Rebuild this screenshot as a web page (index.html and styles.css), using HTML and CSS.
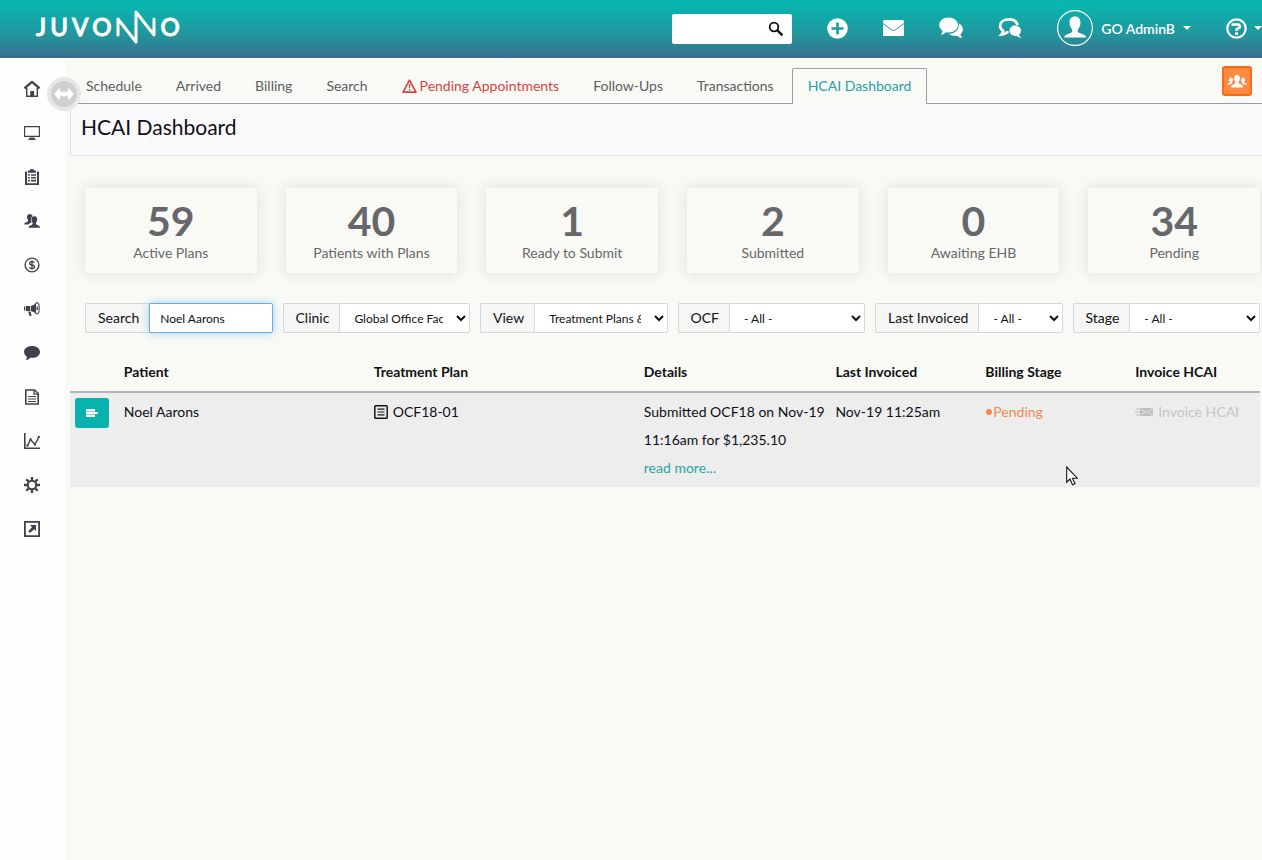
FILE: index.html
```html
<!DOCTYPE html>
<html lang="en">
<head>
<meta charset="utf-8">
<title>HCAI Dashboard</title>
<link rel="stylesheet" href="styles.css">
</head>
<body>
<header class="topbar">
  <a class="logo" href="#" aria-label="Juvonno">
    <span>J</span><span>U</span><span>V</span><span>O</span>
    <svg class="logo-mark" width="41" height="36" viewBox="0 0 41 36" fill="none" stroke="#fff" stroke-width="3" stroke-linejoin="round" stroke-linecap="round"><path d="M2 26V10L20 33V3L38 26V10"/></svg>
    <span>O</span>
  </a>
  <div class="tools">
    <form class="quick"><input type="text" aria-label="Quick search"><button type="button" aria-label="Find"><svg width="16" height="16" viewBox="0 0 16 16" fill="none" stroke="#111"><circle cx="6" cy="6" r="4.3" stroke-width="1.8"/><path d="M9.2 9.2L14.4 14.4" stroke-width="2.4"/></svg></button></form>
    <button class="tool" type="button" aria-label="Add"><svg width="21" height="21" viewBox="0 0 21 21"><circle cx="10.500" cy="10.500" r="10.300" fill="#fff"/><path d="M10.500 4.500v12M4.500 10.500h12" stroke="#1b9da1" stroke-width="2.600"/></svg></button>
    <button class="tool" type="button" aria-label="Mail"><svg width="21" height="16" viewBox="0 0 21 16"><rect width="21" height="16" rx="1.500" fill="#fff"/><path d="M0 3.500L8.500 9.800Q10.500 11.200 12.500 9.800L21 3.500" fill="none" stroke="#239399" stroke-width="1"/></svg></button>
    <button class="tool" type="button" aria-label="Chat"><svg width="24" height="22" viewBox="0 0 24 22" fill="#fff"><path d="M20 6.500C26 10 24 15.500 21.500 17Q21.500 19.500 23.500 21Q20 21 18 18.800Q13 19.500 10 17Q20 16 20 6.500Z"/><path d="M9.500 .5C15 .5 19 3.800 19 8S15 15.500 9.500 15.500Q8 15.500 7 15.200Q4.500 18 1.500 18Q3.500 16 3.500 13.800Q.3 11.500 .3 8C.3 3.800 4 .5 9.500 .5Z"/></svg></button>
    <button class="tool" type="button" aria-label="Conversations"><svg width="24" height="22" viewBox="0 0 25 22"><path d="M20.500 8C19.500 4 16 2 11.500 2C6 2 2.200 4.800 2.200 9Q2.200 12 5.300 14Q5.300 16 3.500 18Q7 18 9 15.500L11 15.700" fill="none" stroke="#fff" stroke-width="2.800"/><path d="M18 8.500C21.500 8.500 24 10.800 24 13.700Q24 16.500 22 17.800Q22 19.800 24.300 21Q21 21.300 19.200 19.200C15 19.500 12 17 12 13.800S14.500 8.500 18 8.500Z" fill="#fff"/></svg></button>
    <button class="user" type="button"><svg width="36" height="36" viewBox="0 0 36 36"><circle cx="18" cy="18" r="17.400" fill="none" stroke="#fff" stroke-width="1.200"/><path d="M18 6.500C21.500 6.500 23.500 9 23.500 12.500C23.500 16 22.200 18 20.800 19.500V22Q22 23 25.500 24.200Q29 25.300 29.300 27.500H7Q7.200 25.300 10.500 24.200Q14 23 15.200 22V19.500C13.800 18 12.500 16 12.500 12.500C12.500 9 14.500 6.500 18 6.500Z" fill="#fff"/></svg><span>GO AdminB</span><i class="caret"></i></button>
    <button class="help" type="button" aria-label="Help"><svg width="21" height="21" viewBox="0 0 21 21" fill="none" stroke="#fff"><circle cx="10.500" cy="10.500" r="9.200" stroke-width="2.200"/><path d="M6.800 8V6.500H12.600L13.800 7.700V9.300L10.600 11.200V13" stroke-width="2.500"/><path d="M9.200 14.300h2.800v2.500H9.200z" fill="#fff" stroke="none"/></svg><i class="caret"></i></button>
  </div>
</header>
<div class="shell">
  <nav class="side" aria-label="Modules">
    <a href="#" aria-label="Home"><svg viewBox="0 0 16 16"><path d="M2.700 7V15.200H13.300V7" fill="none" stroke="#43404c" stroke-width="1.400"/><path d="M.5 7.300L8 .8L15.500 7.300" fill="none" stroke="#43404c" stroke-width="2.200"/><path d="M6.300 10h3.800v5.500H6.300z"/></svg></a>
    <a href="#" aria-label="Desktop"><svg viewBox="0 0 16 16"><path d="M.6 1.600h14.800v9.800H.6z" fill="none" stroke="#43404c" stroke-width="1.200"/><path d="M6 12.500h4l2 2.500H4z"/></svg></a>
    <a href="#" aria-label="Clipboard"><svg viewBox="0 0 16 16"><path d="M2 2.500V15.200H14V2.500" fill="none" stroke="#43404c" stroke-width="2"/><path d="M4 1.500h2V.3h4v1.200h2v2.200H4zM4 5.200h1.800v1.600H4zM7 5.200h5v1.600H7zM4 8h1.800v1.600H4zM7 8h5v1.600H7zM4 10.800h1.800v1.600H4zM7 10.800h5v1.600H7z"/></svg></a>
    <a href="#" aria-label="Patients"><svg viewBox="0 0 16 16"><path d="M5.500 1C7.500 1 8.300 2 8.600 3.200Q6.300 4.500 7 7.500L7.500 9.500Q5 10.500 4.500 11.500H.2Q.2 10 1.500 9.500Q3.500 9 4 8V7Q2.800 5.500 3 3.500Q3.300 1 5.500 1Z"/><path d="M10.300 3.200C12.500 3.200 13.300 4.800 13.200 6.600Q13 8.500 12 9.700V11Q12.500 12 14.500 12.500Q16 13 16 14.700H4.500Q4.600 13 6.200 12.500Q8.200 12 8.600 11V9.700Q7.500 8.500 7.400 6.600Q7.400 3.200 10.300 3.200Z"/></svg></a>
    <a href="#" aria-label="Billing"><svg viewBox="0 0 16 16" fill="none" stroke="#43404c"><circle cx="8" cy="8" r="6.900" stroke-width="1.400"/><path d="M10.500 5.700Q9.800 4.700 8 4.700Q5.700 4.700 5.700 6.300T8 8T10.400 9.700T8 11.400Q6 11.400 5.400 10.200M8 3.200V12.800" stroke-width="1.300"/></svg></a>
    <a href="#" aria-label="Campaigns"><svg viewBox="0 0 16 16"><path d="M0 5.500h1.300v4H0zM2 5H6V10H2zM6.700 5Q9.500 4.500 12 2.200V12.500Q9.500 10.500 6.700 10zM4.200 10.500H6.500L7.500 14.500Q6.500 15.500 5.300 14.500z"/><ellipse cx="13" cy="7.300" rx="2.200" ry="5.700" fill="none" stroke="#43404c" stroke-width="1.100"/><path d="M12.500 5.500h1.400v3.600h-1.400z"/></svg></a>
    <a href="#" aria-label="Messages"><svg viewBox="0 0 16 16"><path d="M8 1C12.500 1 16 3.500 16 7S12.500 12.800 8 12.800L6.300 12.700Q4.500 15 1.500 15.300Q3 13.800 2.800 11.500Q0 10 0 7C0 3.500 3.500 1 8 1Z"/></svg></a>
    <a href="#" aria-label="Documents"><svg viewBox="0 0 16 16" fill="none" stroke="#43404c"><path d="M1.800 1H10.500L14.200 4.500V15H1.800Z" stroke-width="1.600"/><path d="M10 1V5.200H14" stroke-width="1.300"/><path d="M4 7.500H12M4 10H12M4 12.500H12" stroke-width="1.200"/></svg></a>
    <a href="#" aria-label="Reports"><svg viewBox="0 0 16 16" fill="none" stroke="#43404c"><path d="M.8 0V15.200H16" stroke-width="1.600"/><path d="M3.500 12.500L6.500 6.500L11 11.500L14.800 4" stroke-width="1.400"/><path d="M2.500 11.500h2v2h-2zM5.500 5.300h2v2h-2zM10 10.500h2v2h-2zM13.800 3h2v2h-2z" fill="#43404c" stroke="none"/></svg></a>
    <a href="#" aria-label="Settings"><svg viewBox="0 0 16 16" fill="none" stroke="#43404c"><circle cx="8" cy="8" r="4.200" stroke-width="2"/><path d="M8 0V4M8 12V16M0 8H4M12 8H16M2.300 2.300L5 5M11 11L13.700 13.700M2.300 13.700L5 11M11 5L13.700 2.300" stroke-width="2.300"/></svg></a>
    <a href="#" aria-label="Open external"><svg viewBox="0 0 16 16"><path d="M.9 .9h14.200v14.200H.9z" fill="none" stroke="#43404c" stroke-width="1.800"/><path d="M6 4H12V10L10.200 8.200L6 12L4.300 10.300L8 6.200Z"/></svg></a>
  </nav>
  <button class="toggle" type="button" aria-label="Toggle sidebar"><svg width="20" height="14" viewBox="0 0 20 14"><path d="M0 7L6 .5V4.700H14V.5L20 7L14 13.500V9.300H6V13.500Z" fill="#fff"/></svg></button>
  <main class="main">
    <nav class="tabs" aria-label="Sections">
      <a href="#">Schedule</a><a href="#">Arrived</a><a href="#">Billing</a><a href="#">Search</a>
      <a class="alert" href="#"><svg width="15" height="14" viewBox="0 0 15 14"><path d="M7.500 1.200L14 13.100H1Z" fill="none" stroke="#d9433f" stroke-width="1.600" stroke-linejoin="round"/><path d="M6.800 4.800h1.500v4H6.800zM6.800 10h1.500v1.500H6.800z" fill="#d9433f"/></svg>Pending Appointments</a>
      <a href="#">Follow-Ups</a><a href="#">Transactions</a><a class="active" href="#" aria-current="page">HCAI Dashboard</a>
      <button class="team" type="button" aria-label="Team"><svg width="20" height="13" viewBox="0 0 20 13" fill="#fff"><path d="M10 0C12 0 13 1.500 13 3.500Q12.800 5.500 11.600 6.800V8Q12 8.800 14 9.400Q15.800 10 16 12.500H4Q4.200 10 6 9.400Q8 8.800 8.400 8V6.800Q7.200 5.500 7 3.500C7 1.500 8 0 10 0Z"/><path d="M4 2.500Q6 2.500 6 5Q5.900 6.500 5 7.300Q5 8.300 5.500 8.300Q4 9 3.500 9.600H0Q0 8.500 1.200 8.200Q3 8 3 7.200Q2 6.500 2 5Q2 2.500 4 2.500ZM16 2.500Q14 2.500 14 5Q14.100 6.500 15 7.300Q15 8.300 14.500 8.300Q16 9 16.500 9.600H20Q20 8.500 18.800 8.200Q17 8 17 7.200Q18 6.500 18 5Q18 2.500 16 2.500Z"/></svg></button>
    </nav>
    <h1 class="title">HCAI Dashboard</h1>
    <section class="cards">
      <div class="card"><strong>59</strong><span>Active Plans</span></div>
      <div class="card"><strong>40</strong><span>Patients with Plans</span></div>
      <div class="card"><strong>1</strong><span>Ready to Submit</span></div>
      <div class="card"><strong>2</strong><span>Submitted</span></div>
      <div class="card"><strong>0</strong><span>Awaiting EHB</span></div>
      <div class="card"><strong>34</strong><span>Pending</span></div>
    </section>
    <form class="filters">
      <div class="group"><label for="f-search">Search</label><input class="focused" id="f-search" type="text" value="Noel Aarons"></div>
      <div class="group"><label for="f-clinic">Clinic</label><select id="f-clinic"><option>Global Office Facility</option></select></div>
      <div class="group"><label for="f-view">View</label><select id="f-view"><option>Treatment Plans &amp; Invoices</option></select></div>
      <div class="group"><label for="f-ocf">OCF</label><select id="f-ocf"><option>- All -</option></select></div>
      <div class="group"><label for="f-last">Last Invoiced</label><select id="f-last"><option>- All -</option></select></div>
      <div class="group"><label for="f-stage">Stage</label><select id="f-stage"><option>- All -</option></select></div>
    </form>
    <table class="plans">
      <colgroup><col class="c-act"><col class="c-patient"><col class="c-plan"><col class="c-details"><col class="c-date"><col class="c-date"><col></colgroup>
      <thead><tr><th></th><th>Patient</th><th>Treatment Plan</th><th>Details</th><th>Last Invoiced</th><th>Billing Stage</th><th>Invoice HCAI</th></tr></thead>
      <tbody><tr>
        <td><button class="menu" type="button" aria-label="Plan actions"><svg width="12" height="10" viewBox="0 0 12 10" fill="#fff"><path d="M0 1h9v2H0zM0 4h12v2H0zM0 7h9v2H0z"/><path d="M0 1h9v8H0z" opacity=".5"/></svg></button></td>
        <td>Noel Aarons</td>
        <td><span class="with-icon"><svg width="14" height="14" viewBox="0 0 14 14" fill="none" stroke="#15151d"><rect x=".8" y=".8" width="12.400" height="12.400" rx=".8" stroke-width="1.500"/><path d="M3.500 4.200h7M3.500 7h7M3.500 9.800h7" stroke-width="1.200"/></svg>OCF18-01</span></td>
        <td>Submitted OCF18 on Nov-19 11:16am for $1,235.10<br><a href="#">read more...</a></td>
        <td>Nov-19 11:25am</td>
        <td><span class="stage"><i class="dot"></i>Pending</span></td>
        <td><span class="with-icon off"><svg width="18" height="10" viewBox="0 0 18 10"><path d="M5 1H18V9H5Z" fill="#c0c0c3"/><path d="M5.500 1.500L11.500 5.500L17.500 1.500M5.500 8.500L9.500 5M17.500 8.500L13.500 5" fill="none" stroke="#ededed" stroke-width=".8"/><path d="M1 2H6M0 5H7M1 8H6" stroke="#c0c0c3" stroke-width="1.200"/></svg>Invoice HCAI</span></td>
      </tr></tbody>
    </table>
  </main>
</div>
<svg class="pointer" width="12" height="20" viewBox="0 0 12 20"><path d="M.7 1V16.200L4 13L6.500 18.800L9 17.700L6.500 12.200H11.200Z" fill="#fff" stroke="#15151d" stroke-width="1.100"/></svg>
</body>
</html>
```
FILE: styles.css
```css
* { box-sizing: border-box; }
body {
  margin: 0;
  min-height: 100vh;
  display: flex;
  flex-direction: column;
  overflow: hidden;
  background: #f9faf5;
  color: #101016;
  font: 14px/20px Lato, "Open Sans", sans-serif;
}
button, input, select { font-family: inherit; }
button { padding: 0; border: 0; background: none; color: inherit; }
a { color: inherit; text-decoration: none; }
svg { display: block; flex: none; }

.topbar {
  height: 58px;
  padding-left: 36px;
  display: flex;
  justify-content: space-between;
  align-items: center;
  background: linear-gradient(#09b5af 10%, #24929b 65%, #3b6c8e);
  color: #fff;
}
.logo { display: flex; align-items: center; gap: 4px; padding-bottom: 4px; font-size: 24px; font-weight: 500; line-height: 36px; -webkit-text-stroke: 1px #fff; }
.tools { display: flex; align-items: center; gap: 35px; padding-bottom: 2px; }
.quick { display: flex; width: 120px; height: 30px; margin-top: 2px; background: #fff; border-radius: 2px; }
.quick input { flex: 1; min-width: 0; border: 0; background: none; outline: 0; padding: 0 8px; }
.quick button { width: 32px; display: flex; align-items: center; justify-content: center; }
.user { display: flex; align-items: center; gap: 8px; font-size: 14px; font-weight: 600; white-space: nowrap; }
.help { display: flex; align-items: center; gap: 7px; }
.caret { border: 4px solid transparent; border-top-color: #fff; border-bottom: 0; }

.shell { flex: 1; display: flex; position: relative; }
.side {
  width: 65px;
  padding: 9px 1px 0 0;
  display: flex;
  flex-direction: column;
  background: #fefefe;
}
.side a { height: 44px; display: flex; align-items: center; justify-content: center; }
.side svg { width: 16px; height: 16px; fill: #43404c; }
.side svg[fill="none"] { fill: none; }
.toggle {
  position: absolute;
  left: 47px;
  top: 19px;
  width: 34px;
  height: 34px;
  display: flex;
  align-items: center;
  justify-content: center;
  border: 4px solid #e7e7e6;
  border-radius: 50%;
  background: #cfcfcf;
}

.main { flex: 1; min-width: 0; padding-left: 5px; }
.tabs {
  height: 46px;
  display: flex;
  align-items: flex-end;
  gap: 2px;
  border-bottom: 1px solid #9c9ca6;
  color: #5c5d62;
  white-space: nowrap;
}
.tabs a {
  height: 36px;
  margin-bottom: -1px;
  padding: 6px 15px 8px;
  display: flex;
  align-items: center;
  gap: 3px;
  border: 1px solid transparent;
  border-bottom: 0;
  border-radius: 2px 2px 0 0;
}
.tabs .alert { color: #d9433f; }
.tabs .active { border-color: #9c9ca6; background: #f9faf5; color: #1fa3a5; }
.team {
  width: 30px;
  height: 30px;
  margin: 0 10px 7px auto;
  display: flex;
  align-items: center;
  justify-content: center;
  border: 2px solid #ff6a10;
  border-radius: 3px;
  background: #ff8a42;
}
.title {
  margin: 0;
  padding: 8px 10px 14px;
  border: solid #dfe0e4;
  border-width: 0 0 1px 1px;
  background: #fafafc;
  font-size: 21px;
  line-height: 29px;
  font-weight: 400;
}
.cards {
  display: grid;
  grid-template-columns: repeat(6, 1fr);
  gap: 29px;
  padding: 32px 2px 30px 15px;
}
.card {
  height: 85px;
  padding-top: 10px;
  display: flex;
  flex-direction: column;
  align-items: center;
  border-radius: 3px;
  background: #f9faf5;
  box-shadow: 0 0 14px rgba(60, 60, 100, 0.15);
  color: #66676a;
}
.card strong { font-size: 41px; line-height: 45px; }
.filters {
  display: grid;
  grid-template-columns: repeat(6, minmax(0, 1fr));
  gap: 10px;
  padding: 0 2px 20px 15px;
}
.group { display: flex; height: 30px; }
.group label {
  padding: 0 10px 0 12px;
  border: 1px solid #d6d7d9;
  border-right: 0;
  border-radius: 2px 0 0 2px;
  background: #f6f6f5;
  line-height: 28px;
  white-space: nowrap;
}
.group input, .group select {
  flex: 1;
  min-width: 0;
  height: 30px;
  padding: 0 10px;
  border: 1px solid #d6d7d9;
  border-radius: 0 2px 2px 0;
  background-color: #fff;
  color: #101016;
  font-size: 12px;
}
.group .focused { border-color: #66afe0; box-shadow: 0 0 8px rgba(102, 175, 233, 0.6); outline: 0; }

.plans { width: calc(100% - 2px); table-layout: fixed; border-collapse: collapse; line-height: 28px; }
.c-act { width: 4.1%; }
.c-patient { width: 21%; }
.c-plan { width: 22.7%; }
.c-details { width: 16.1%; }
.c-date { width: 12.6%; }
.plans th, .plans td { padding: 5px; text-align: left; vertical-align: top; }
.plans th { font-weight: 700; border-bottom: 2px solid #b2b4b9; }
.plans tbody { background: #ededed; }
.plans a { color: #2aa5a6; }
.menu {
  width: 34px;
  height: 30px;
  display: flex;
  align-items: center;
  justify-content: center;
  border-radius: 3px;
  background: #09b3ad;
}
.with-icon { display: flex; align-items: center; gap: 5px; white-space: nowrap; }
.off { color: #c4c4c6; }
.stage { display: flex; align-items: center; gap: 1px; color: #f5874f; }
.dot { width: 6px; height: 6px; margin-left: 1px; border-radius: 50%; background: #f5874f; }
.pointer { position: absolute; left: 1066px; top: 466px; }
```
